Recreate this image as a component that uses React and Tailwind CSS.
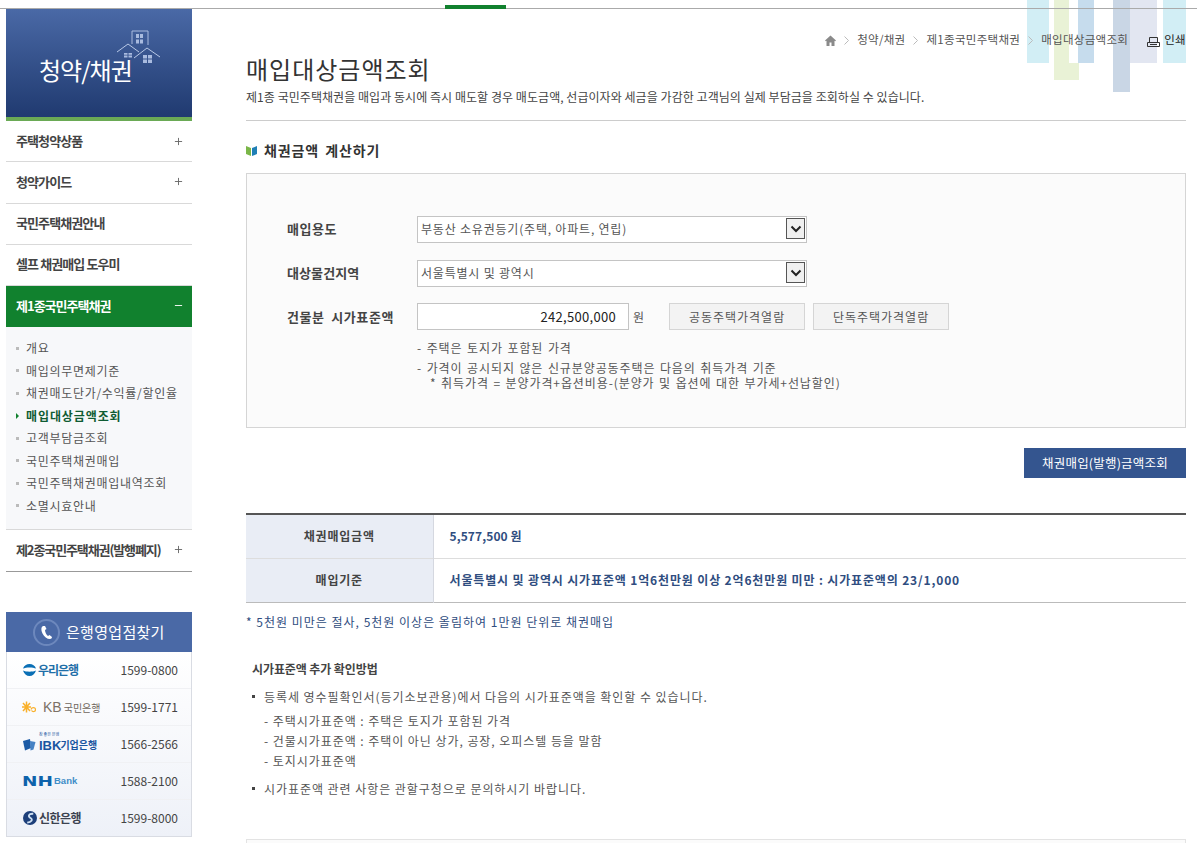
import { Plus, Minus } from 'lucide-react';

const menuTop = ['주택청약상품', '청약가이드', '국민주택채권안내', '셀프 채권매입 도우미'];
const subMenu = ['개요', '매입의무면제기준', '채권매도단가/수익률/할인율', '매입대상금액조회', '고객부담금조회', '국민주택채권매입', '국민주택채권매입내역조회', '소멸시효안내'];

function WooriLogo() {
  return (
    <div className="flex items-center gap-[1px]">
      <svg width="15" height="14" viewBox="0 0 15 14">
        <path d="M1 5.500C2 2.500 4.500 1 7.500 1s5.500 1.500 6.500 4.500C11 4 4 4 1 5.500z" fill="#0a6fb5" />
        <path d="M1 7.500c3 1.600 10 1.600 13 0-1 3.500-3.500 5.500-6.500 5.500S2 11 1 7.500z" fill="#0a6fb5" />
      </svg>
      <span className="text-[12px] font-bold tracking-[-1px] text-[#1f6fa8]">우리은행</span>
    </div>
  );
}

function KbLogo() {
  return (
    <div className="flex items-center">
      <svg width="14" height="12" viewBox="0 0 14 12">
        <path d="M4.500 .5v11M0 6h9M1 2l7 8M8 2l-7 8" stroke="#f9b02a" strokeWidth="1.500" />
        <path d="M9 8.500c.6-2.500 4.500-2.500 4.500 0s-3 2.500-4 1" stroke="#f9b02a" strokeWidth="1.200" fill="none" />
      </svg>
      <span className="ml-[7px] text-[14px] leading-none text-[#7b7166] [font-family:'Liberation_Sans',sans-serif]">KB</span>
      <span className="ml-[2px] text-[10px] text-[#6f665c]">국민은행</span>
    </div>
  );
}

function IbkLogo() {
  return (
    <div className="flex items-center">
      <svg width="14" height="13" viewBox="0 0 14 13" className="mt-[1px]">
        <path d="M1 3l7-2 1 9-6 2.500z" fill="#1b5aa5" />
        <path d="M8 3l5.500 1-2 7.500-3 1z" fill="#4682c4" />
      </svg>
      <div className="relative ml-[3px] flex items-center pt-[2px]">
        <span className="absolute left-0 top-[-5px] text-[4px] leading-[5px] text-[#1a55a0]">참 좋은 은행</span>
        <span className="text-[13px] font-bold leading-none text-[#1a55a0] [font-family:'Liberation_Sans',sans-serif]">IBK</span>
        <span className="ml-[-1px] text-[10px] font-bold leading-none text-[#1a55a0]">기업은행</span>
      </div>
    </div>
  );
}

function NhLogo() {
  return (
    <div className="flex items-center">
      <span className="w-[31px] origin-left scale-x-[1.32] text-[14px] font-bold leading-none text-[#0d62ab] [font-family:'DejaVu_Sans',sans-serif]">NH</span>
      <span className="ml-[1px] text-[9.500px] font-bold leading-none text-[#3f8dc8] [font-family:'Liberation_Sans',sans-serif]">Bank</span>
    </div>
  );
}

function ShinhanLogo() {
  return (
    <div className="ml-[1px] flex items-center gap-[2px]">
      <svg width="14" height="14" viewBox="0 0 15 15">
        <circle cx="7.500" cy="7.500" r="7.500" fill="#1d3f7a" />
        <path d="M11 3C6 2.500 5 6 8 7.500S9 12 4.500 12.500" stroke="#cfe0f2" strokeWidth="2" fill="none" />
      </svg>
      <span className="text-[12px] font-bold tracking-[-0.5px] text-[#3c4250]">신한은행</span>
    </div>
  );
}

const banks = [
  { logo: <WooriLogo />, tel: '1599-0800', h: 'h-[37px]' },
  { logo: <KbLogo />, tel: '1599-1771', h: 'h-[37px]' },
  { logo: <IbkLogo />, tel: '1566-2566', h: 'h-[37px]' },
  { logo: <NhLogo />, tel: '1588-2100', h: 'h-[37px]' },
  { logo: <ShinhanLogo />, tel: '1599-8000', h: 'h-[36px]' },
];

function Sidebar() {
  return (
    <aside className="ml-[6px] w-[186px] shrink-0">
      <div className="relative h-[112px] border-b-4 border-[#6aaa55] bg-gradient-to-b from-[#4a69a6] to-[#203a70]">
        <svg className="absolute left-[111px] top-[21px]" width="43" height="34" viewBox="0 0 43 34" fill="none">
          <path d="M15 14V1h16v14" stroke="#a9bbdf" />
          <path d="M19 4h3v4h-3zM23 4h3v4h-3zM19 9.500h3v4h-3zM23 9.500h3v4h-3z" fill="#a9bbdf" />
          <path d="M0 22l11-8 11 8" stroke="#b8c8e6" />
          <path d="M17 28l13-10 13 9" stroke="#b8c8e6" />
          <path d="M7 23h3.500v1.800H7zM11.500 23H15v1.800h-3.500zM7 25.500h3.500v2H7zM11.500 25.500H15v2h-3.500z" fill="#a9bbdf" />
          <path d="M26 25h4v3.500h-4zM31 25h4v3.500h-4zM26 29.500h4v3.500h-4zM31 29.500h4v3.500h-4z" fill="#a9bbdf" />
        </svg>
        <div className="absolute left-[33px] top-[43px] text-[24px] leading-[36px] tracking-[-1px] text-white">청약/채권</div>
      </div>

      {menuTop.map((item, i) => (
        <div key={item} className={`flex items-center justify-between border-b border-[#d9d9d9] pl-[10px] pr-[8px] ${i === 0 ? 'h-[41px]' : i === 1 ? 'h-[42px] pb-[2px]' : 'h-[41px] pb-[2px]'}`}>
          <span className="text-[13px] font-bold tracking-[-0.9px] text-[#444]">{item}</span>
          {i < 2 && <Plus size={11} strokeWidth={2} className="text-[#666]" />}
        </div>
      ))}

      <div className="flex h-[41px] items-center justify-between bg-[#11812e] pb-[2px] pl-[10px] pr-[8px]">
        <span className="text-[13px] font-bold tracking-[-1px] text-white">제1종국민주택채권</span>
        <Minus size={11} strokeWidth={2} className="text-white" />
      </div>
      <ul className="h-[203px] border-b border-[#d9d9d9] bg-[#f7f8fa] pt-[10px]">
        {subMenu.map((item, i) => (
          <li key={item} className={`flex h-[22.500px] items-center pl-[10px] text-[12px] tracking-[0.7px] ${i === 3 ? 'font-bold tracking-[0.9px] text-[#0f5c33]' : 'text-[#555]'}`}>
            {i === 3
              ? <span className="mr-[7px] h-0 w-0 border-y-[3px] border-l-[3px] border-y-transparent border-l-[#11812e]" />
              : <span className="mr-[7px] h-[3px] w-[3px] bg-[#bbb]" />}
            {item}
          </li>
        ))}
      </ul>
      <div className="flex h-[42px] items-center justify-between border-b border-[#999] pb-[2px] pl-[10px] pr-[8px]">
        <span className="text-[13px] font-bold tracking-[-1.1px] text-[#444]">제2종국민주택채권(발행폐지)</span>
        <Plus size={11} strokeWidth={2} className="shrink-0 text-[#666]" />
      </div>

      <div className="mt-[40px] flex h-[40px] items-center bg-[#4a69a6] pl-[27px]">
        <span className="flex h-[27px] w-[27px] items-center justify-center rounded-full border-2 border-[#6d88bd]">
          <svg width="13" height="15" viewBox="0 0 13 15"><path d="M3 1C1 2 .8 5 2.500 8.500S7 14 10 14c1 0 2-1 2-2l-2.500-2-1.500 1C6.500 10 5 7 5 5l1.500-1L5 1z" fill="#fff" /></svg>
        </span>
        <span className="ml-[6px] text-[15px] tracking-[0.3px] text-white">은행영업점찾기</span>
      </div>
      <div className="border-x border-b border-[#d9dce3] bg-gradient-to-b from-white to-[#eef1f8]">
        {banks.map((bank, i) => (
          <div key={bank.tel} className={`flex items-center justify-between pl-[15px] pr-[13px] ${bank.h} ${i < 4 ? 'border-b border-[#f0f1f4]' : ''}`}>
            {bank.logo}
            <span className="text-[12px] text-[#444]">{bank.tel}</span>
          </div>
        ))}
      </div>
    </aside>
  );
}

function SelectBox({ value }) {
  return (
    <div className="relative h-[27px] w-[390px]">
      <select defaultValue={value} className="h-full w-full appearance-none border border-[#c4c4c4] bg-white pl-[3px] text-[12px] tracking-[0.8px] text-[#555]">
        <option>{value}</option>
      </select>
      <span className="absolute right-[2px] top-[3px] flex h-[21px] w-[19px] items-center justify-center border border-[#555] bg-[#f0f0f0]">
        <svg width="12" height="8" viewBox="0 0 12 8"><path d="M1.500 1.500L6 6l4.500-4.500" stroke="#222" strokeWidth="2" fill="none" /></svg>
      </span>
    </div>
  );
}

function Chevron() {
  return (
    <svg className="mx-[8px]" width="5" height="9" viewBox="0 0 5 9" fill="none" stroke="#bbb"><path d="M.5.5l4 4-4 4" /></svg>
  );
}

function Main() {
  return (
    <main className="relative ml-[54px] w-[940px] shrink-0">
      <nav className="flex h-[44px] items-center justify-end pt-[18px] text-[11.500px] tracking-[0.3px] text-[#555]">
        <svg width="11" height="11" viewBox="0 0 11 11"><path d="M5.500.5L11 5.500l-.8.8-.7-.6V11H6.500V7.500h-2V11h-3V5.700l-.7.6L0 5.500z" fill="#8a8a8a" /></svg>
        <Chevron />
        <span>청약/채권</span>
        <Chevron />
        <span>제1종국민주택채권</span>
        <Chevron />
        <span>매입대상금액조회</span>
        <svg className="ml-[19px] mt-[3px]" width="13" height="10" viewBox="0 0 13 10" fill="none" stroke="#333"><path d="M2.500 5.500V.5h8v5M.5 5.500h12v4H.5zM3 7.500h7" /></svg>
        <span className="ml-[4px] text-[#222]">인쇄</span>
      </nav>
      <h1 className="text-[24px] leading-[32px] tracking-[1px] text-[#333]">매입대상금액조회</h1>
      <p className="mt-[3px] text-[12px] leading-[18px] tracking-[0.05px] text-[#444]">제1종 국민주택채권을 매입과 동시에 즉시 매도할 경우 매도금액, 선급이자와 세금을 가감한 고객님의 실제 부담금을 조회하실 수 있습니다.</p>
      <div className="mt-[14px] border-t border-[#ccc]" />

      <h2 className="mt-[19px] flex h-[20px] items-center text-[14px] font-bold tracking-[0.9px] text-[#333] [word-spacing:2px]">
        <svg className="mr-[7px]" width="11" height="11" viewBox="0 0 11 11"><path d="M0 1l5 2v8L0 9z" fill="#7ab648" /><path d="M11 1L6 3v8l5-2z" fill="#1f7fb5" /></svg>
        채권금액 계산하기
      </h2>

      <section className="mt-[13px] h-[255px] border border-[#d5d5d5] bg-[#fbfbfb] pl-[40px] pt-[41px]">
        <div className="flex h-[27px] items-center">
          <span className="w-[130px] text-[13px] font-bold tracking-[0.5px] text-[#444]">매입용도</span>
          <SelectBox value="부동산 소유권등기(주택, 아파트, 연립)" />
        </div>
        <div className="mt-[17px] flex h-[27px] items-center">
          <span className="w-[130px] text-[13px] font-bold tracking-[0.1px] text-[#444]">대상물건지역</span>
          <SelectBox value="서울특별시 및 광역시" />
        </div>
        <div className="mt-[17px] flex h-[27px] items-center">
          <span className="w-[130px] text-[13px] font-bold tracking-[0.6px] text-[#444] [word-spacing:3px]">건물분 시가표준액</span>
          <input readOnly value="242,500,000" className="h-[27px] w-[212px] border border-[#c4c4c4] bg-white pr-[12px] text-right text-[13px] tracking-[0.3px] text-[#222]" />
          <span className="ml-[4px] text-[12px] text-[#555]">원</span>
          <button className="ml-[25px] h-[27px] w-[136px] border border-[#d5d5d5] bg-[#f3f3f3] text-[12px] tracking-[1px] text-[#555]">공동주택가격열람</button>
          <button className="ml-[8px] h-[27px] w-[136px] border border-[#d5d5d5] bg-[#f3f3f3] text-[12px] tracking-[1px] text-[#555]">단독주택가격열람</button>
        </div>
        <ul className="ml-[130px] mt-[9px] text-[12px] tracking-[0.9px] text-[#555] [word-spacing:1px]">
          <li className="h-[18px] leading-[18px]">- 주택은 토지가 포함된 가격</li>
          <li className="mt-[3px] h-[15px] leading-[15px]">- 가격이 공시되지 않은 신규분양공동주택은 다음의 취득가격 기준</li>
          <li className="h-[15px] pl-[13px] leading-[15px]">* 취득가격 = 분양가격+옵션비용-(분양가 및 옵션에 대한 부가세+선납할인)</li>
        </ul>
      </section>

      <div className="mt-[20px] flex justify-end">
        <button className="h-[30px] w-[162px] bg-[#34558f] text-[12.500px] tracking-[0.2px] text-white">채권매입(발행)금액조회</button>
      </div>

      <table className="mt-[35px] w-full border-t-2 border-b border-t-[#555] border-b-[#bbb] text-[12px]">
        <tbody>
          <tr className="h-[44px] border-b border-[#ddd]">
            <th className="w-[187px] border-r border-[#d5d8e0] bg-[#e9edf5] font-bold tracking-[0.8px] text-[#444]">채권매입금액</th>
            <td className="pl-[16px] font-bold tracking-[0.1px] text-[#2f4d80]">5,577,500 원</td>
          </tr>
          <tr className="h-[44px]">
            <th className="border-r border-[#d5d8e0] bg-[#e9edf5] font-bold tracking-[0.8px] text-[#444]">매입기준</th>
            <td className="pl-[16px] font-bold tracking-[0.85px] text-[#2f4d80]">서울특별시 및 광역시 시가표준액 1억6천만원 이상 2억6천만원 미만 : 시가표준액의 23/1,000</td>
          </tr>
        </tbody>
      </table>

      <p className="mt-[10px] h-[18px] text-[12px] leading-[18px] tracking-[1px] text-[#2f4d80]">* 5천원 미만은 절사, 5천원 이상은 올림하여 1만원 단위로 채권매입</p>

      <h3 className="ml-[6px] mt-[29px] h-[18px] text-[12px] font-bold leading-[18px] tracking-[-0.1px] text-[#444]">시가표준액 추가 확인방법</h3>
      <ul className="ml-[6px] mt-[10px] text-[12px] tracking-[0.95px] text-[#555]">
        <li className="flex h-[18px] items-center"><span className="mr-[9px] h-[3px] w-[3px] bg-[#444]" />등록세 영수필확인서(등기소보관용)에서 다음의 시가표준액을 확인할 수 있습니다.</li>
        <li className="mt-[5px] h-[20px] pl-[12px] leading-[20px]">- 주택시가표준액 : 주택은 토지가 포함된 가격</li>
        <li className="h-[20px] pl-[12px] leading-[20px]">- 건물시가표준액 : 주택이 아닌 상가, 공장, 오피스텔 등을 말함</li>
        <li className="h-[20px] pl-[12px] leading-[20px]">- 토지시가표준액</li>
        <li className="mt-[9px] flex h-[18px] items-center"><span className="mr-[9px] h-[3px] w-[3px] bg-[#444]" />시가표준액 관련 사항은 관할구청으로 문의하시기 바랍니다.</li>
      </ul>

      <div className="mt-[41px] h-[40px] border border-[#e3e3e3] bg-[#fbfbfb]" />
    </main>
  );
}

export default function App() {
  return (
    <div className="relative h-[843px] overflow-hidden bg-white font-['Noto_Sans_CJK_KR',sans-serif]">
      {/* decorative stripes top right */}
      <div className="pointer-events-none absolute inset-0">
        <div className="absolute left-[1027px] top-0 h-[63px] w-[22px] bg-[#d2eef5]" />
        <div className="absolute left-[1054px] top-0 h-[63px] w-[15px] bg-[#e9f2d6]" />
        <div className="absolute left-[1054px] top-[63px] h-[17px] w-[25px] bg-[#e9f2d6]" />
        <div className="absolute left-[1078px] top-0 h-[63px] w-[16px] bg-[#c6dced]" />
        <div className="absolute left-[1113px] top-0 h-[92px] w-[17px] bg-[#c9d6e5]" />
        <div className="absolute left-[1130px] top-0 h-[63px] w-[27px] bg-[#e2e6f1]" />
        <div className="absolute left-[1163px] top-0 h-[63px] w-[23px] bg-[#d2eef5]" />
      </div>
      <div className="relative h-[9px] border-b border-[#aaa]" />
      <div className="absolute left-[445px] top-[5px] h-[4px] w-[61px] bg-[#11812e]" />
      <div className="relative flex">
        <Sidebar />
        <Main />
      </div>
    </div>
  );
}
